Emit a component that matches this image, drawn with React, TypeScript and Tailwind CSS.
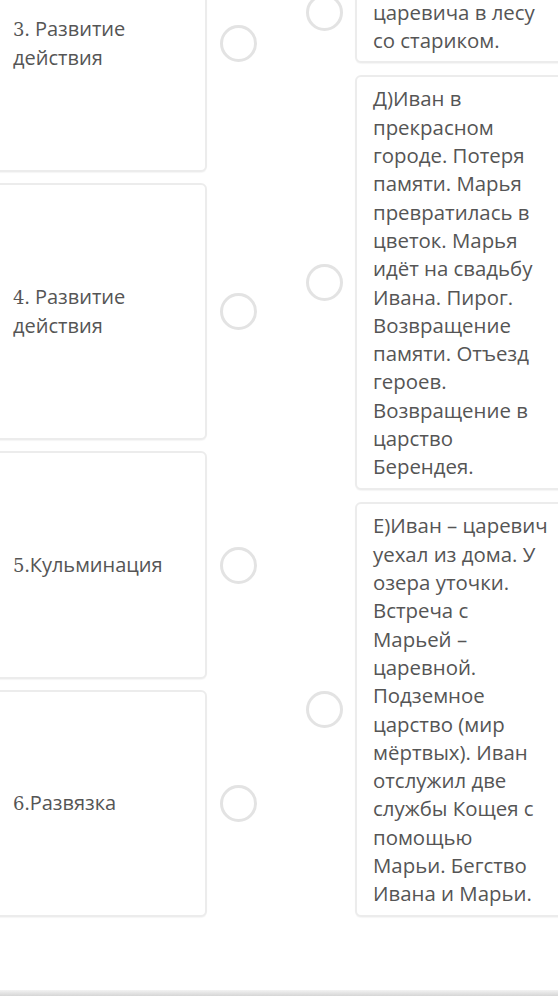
import React from 'react';

const font = { fontFamily: '"Open Sans", "Noto Sans", sans-serif' };

const Circle = () => (
  <div className="w-[37px] h-[37px] shrink-0 rounded-full border-[3px] border-[#e3e3e3] bg-white" />
);

const LeftItem = ({ h, num, children }: { h: string; num: string; children: React.ReactNode }) => (
  <div className="flex items-center gap-[13px]">
    <div
      className={`${h} w-[217px] shrink-0 rounded-md border-2 border-[#ececec] bg-white pl-[21px] pr-3 flex items-center shadow-[0_1px_1px_rgba(0,0,0,0.04)]`}
    >
      <p className="text-[20px] leading-[28px] text-[#555]">
        <span style={{ fontFamily: '"DejaVu Serif", "Liberation Serif", serif' }} className="text-[18px]">
          {num}
        </span>
        {children}
      </p>
    </div>
    <Circle />
  </div>
);

const RightItem = ({ h, lines }: { h: string; lines: string[] }) => (
  <div className="flex items-center gap-[12px]">
    <Circle />
    <div
      className={`${h} w-[230px] shrink-0 rounded-md border-2 border-[#ececec] bg-white pl-[16px] flex items-center overflow-hidden shadow-[0_1px_1px_rgba(0,0,0,0.04)]`}
    >
      <p className="text-[20.4px] leading-[28.3px] text-[#555] whitespace-nowrap">
        {lines.map((l, i) => (
          <span key={i} className="block">
            {l}
          </span>
        ))}
      </p>
    </div>
  </div>
);

export default function App() {
  return (
    <div style={font} className="w-[558px] h-[996px] bg-white overflow-hidden flex flex-col">
      <div className="h-[990px] overflow-hidden flex">
        <div className="-ml-[10px] -mt-[86px] flex flex-col gap-[11px]">
          <LeftItem h="h-[258px]" num="3">
            . Развитие действия
          </LeftItem>
          <LeftItem h="h-[257px]" num="4">
            . Развитие действия
          </LeftItem>
          <LeftItem h="h-[228px]" num="5">
            .Кульминация
          </LeftItem>
          <LeftItem h="h-[227px]" num="6">
            .Развязка
          </LeftItem>
        </div>
        <div className="ml-[49px] -mt-[39px] flex flex-col gap-[12px]">
          <RightItem h="h-[102px]" lines={['В)Встреча Ивана –', 'царевича в лесу', 'со стариком.']} />
          <RightItem
            h="h-[415px]"
            lines={[
              'Д)Иван в',
              'прекрасном',
              'городе. Потеря',
              'памяти. Марья',
              'превратилась в',
              'цветок. Марья',
              'идёт на свадьбу',
              'Ивана. Пирог.',
              'Возвращение',
              'памяти. Отъезд',
              'героев.',
              'Возвращение в',
              'царство',
              'Берендея.',
            ]}
          />
          <RightItem
            h="h-[415px]"
            lines={[
              'Е)Иван – царевич',
              'уехал из дома. У',
              'озера уточки.',
              'Встреча с',
              'Марьей –',
              'царевной.',
              'Подземное',
              'царство (мир',
              'мёртвых). Иван',
              'отслужил две',
              'службы Кощея с',
              'помощью',
              'Марьи. Бегство',
              'Ивана и Марьи.',
            ]}
          />
        </div>
      </div>
      <div className="h-[6px] bg-gradient-to-b from-[#f3f3f3] to-[#d6d6d6]" />
    </div>
  );
}
